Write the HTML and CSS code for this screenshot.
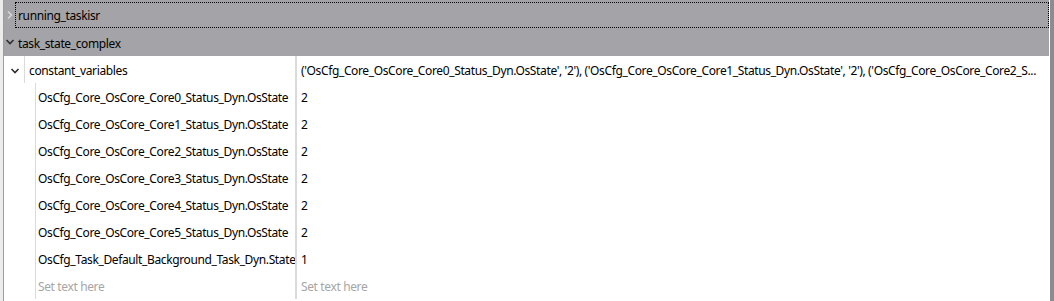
FILE: index.html
```html
<!DOCTYPE html>
<html lang="en">
<head>
    <meta charset="UTF-8">
    <title>Task state tree</title>
    <link rel="stylesheet" href="styles.css">
</head>
<body>
    <div class="view">
        <div class="gutter"></div>
        <div class="tree">
            <div class="group">
                <div class="top-row">
                    <span class="branch">
                        <svg width="8" height="10" viewBox="0 0 8 10"><polyline points="2,1.5 5.5,5 2,8.5" class="chev light"/></svg>
                    </span>
                    <span class="top-label focused">running_taskisr</span>
                </div>
                <div class="top-row">
                    <span class="branch">
                        <svg width="10" height="8" viewBox="0 0 10 8"><polyline points="1.5,2 5,5.5 8.5,2" class="chev dark"/></svg>
                    </span>
                    <span class="top-label">task_state_complex</span>
                </div>
            </div>
            <div class="rows">
                <div class="row">
                    <div class="name lvl1">
                        <span class="branch">
                            <svg width="10" height="8" viewBox="0 0 10 8"><polyline points="1.5,2 5,5.5 8.5,2" class="chev dark"/></svg>
                        </span>
                        <span class="label">constant_variables</span>
                    </div>
                    <div class="value">('OsCfg_Core_OsCore_Core0_Status_Dyn.OsState', '2'), ('OsCfg_Core_OsCore_Core1_Status_Dyn.OsState', '2'), ('OsCfg_Core_OsCore_Core2_S...</div>
                </div>
                <div class="row">
                    <div class="name lvl2"><span class="label">OsCfg_Core_OsCore_Core0_Status_Dyn.OsState</span></div>
                    <div class="value">2</div>
                </div>
                <div class="row">
                    <div class="name lvl2"><span class="label">OsCfg_Core_OsCore_Core1_Status_Dyn.OsState</span></div>
                    <div class="value">2</div>
                </div>
                <div class="row">
                    <div class="name lvl2"><span class="label">OsCfg_Core_OsCore_Core2_Status_Dyn.OsState</span></div>
                    <div class="value">2</div>
                </div>
                <div class="row">
                    <div class="name lvl2"><span class="label">OsCfg_Core_OsCore_Core3_Status_Dyn.OsState</span></div>
                    <div class="value">2</div>
                </div>
                <div class="row">
                    <div class="name lvl2"><span class="label">OsCfg_Core_OsCore_Core4_Status_Dyn.OsState</span></div>
                    <div class="value">2</div>
                </div>
                <div class="row">
                    <div class="name lvl2"><span class="label">OsCfg_Core_OsCore_Core5_Status_Dyn.OsState</span></div>
                    <div class="value">2</div>
                </div>
                <div class="row">
                    <div class="name lvl2"><span class="label">OsCfg_Task_Default_Background_Task_Dyn.State</span></div>
                    <div class="value">1</div>
                </div>
                <div class="row">
                    <div class="name lvl2"><span class="label placeholder">Set text here</span></div>
                    <div class="value placeholder">Set text here</div>
                </div>
            </div>
        </div>
        <div class="scroll"></div>
    </div>
</body>
</html>
```

FILE: styles.css
```css
/* Vue arborescente */
body {
    margin: 0;
    padding: 0;
    background: #ffffff;
    font-family: "Noto Sans", "Open Sans", sans-serif;
    font-size: 12px;
    letter-spacing: -0.37px;
    color: #000000;
}
.view {
    display: flex;
    width: 1054px;
    height: 301px;
    overflow: hidden;
}
.gutter {
    width: 3px;
    background-color: #ececec;
    border-right: 1px solid #9c9c9c;
}
.tree {
    flex: 1;
    display: flex;
    flex-direction: column;
    min-width: 0;
}
.scroll {
    width: 4px;
    background-color: #8c8b90;
    border-left: 1px solid #ffffff;
}
.group {
    background-color: #a4a3a8;
    padding: 1px 0 1px;
}
.top-row {
    display: flex;
    height: 27px;
    align-items: stretch;
}
.branch {
    display: flex;
    align-items: center;
    justify-content: center;
    width: 11px;
}
.top-label {
    flex: 1;
    display: flex;
    align-items: center;
    padding: 2px 0 0 3px;
    margin: 2px 0 1px;
}
.top-label.focused {
    border: 1px dotted #000000;
    padding: 1px 0 0 2px;
    margin: 1px 0 0;
}
.chev {
    fill: none;
    stroke-width: 1.6;
}
.chev.light {
    stroke: #d6d6d8;
}
.chev.dark {
    stroke: #2e2e2e;
}
.rows {
    flex: 1;
    display: flex;
    flex-direction: column;
}
.row {
    display: grid;
    grid-template-columns: 291px 2px 1fr;
    height: 27px;
}
.name {
    display: flex;
    align-items: stretch;
    min-width: 0;
}
.name.lvl1 .branch {
    width: 20px;
}
.name.lvl1 .branch svg {
    margin: 2px 0 0 2px;
}
.name.lvl2 {
    padding-left: 31px;
}
.label {
    flex: 1;
    display: flex;
    align-items: center;
    padding-top: 2px;
    border-left: 1px solid #dadada;
    white-space: nowrap;
    overflow: hidden;
}
.name.lvl1 .label {
    padding-left: 4px;
}
.name.lvl2 .label {
    padding-left: 2px;
}
.value {
    grid-column: 3;
    display: flex;
    align-items: center;
    padding: 2px 0 0 4px;
    white-space: nowrap;
    overflow: hidden;
    border-left: 2px solid #dadada;
    margin-left: -2px;
}
.placeholder {
    color: #a6a6a6;
}
```
